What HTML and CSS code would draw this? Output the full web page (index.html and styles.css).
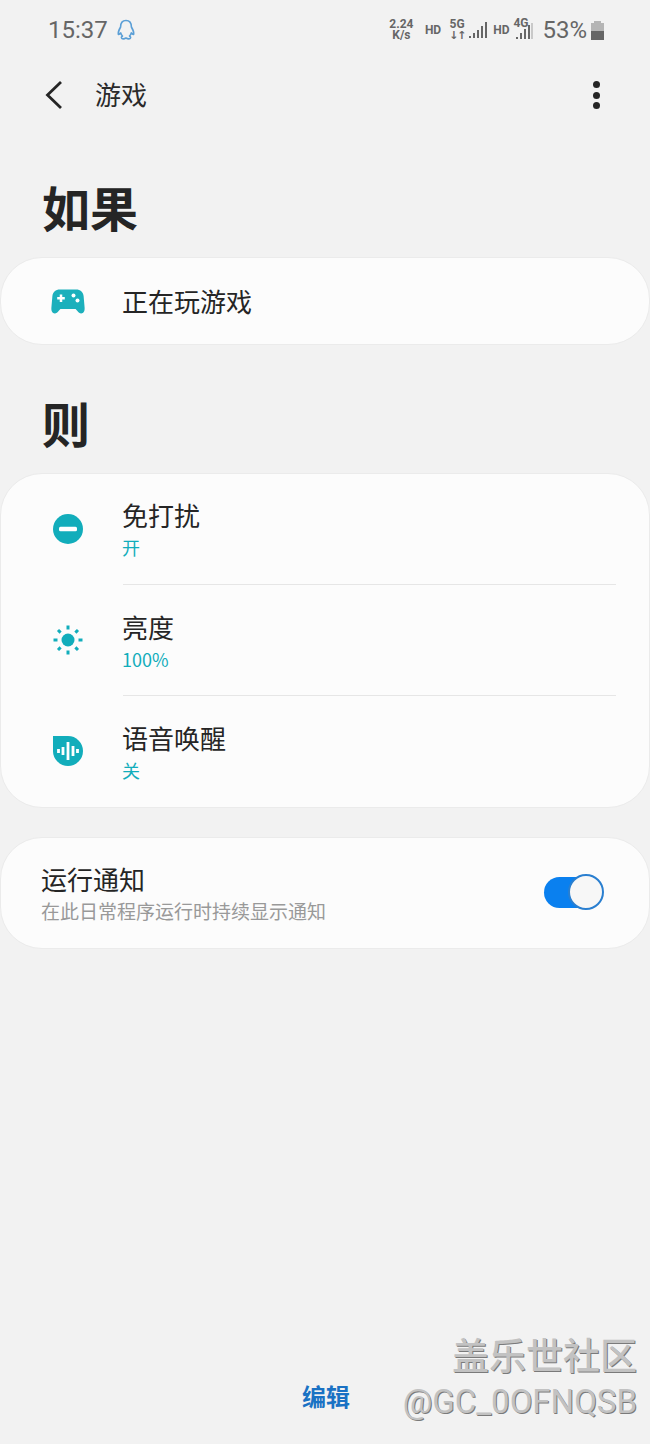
FILE: index.html
```html
<!DOCTYPE html>
<html lang="zh-CN">
<head>
    <meta charset="UTF-8">
    <title>游戏</title>
    <link rel="stylesheet" href="styles.css">
</head>
<body>

<div class="page">

    <div class="statusBar">
        <div class="statusLeft">
            <span class="time">15:37</span>
            <svg class="qq" width="20" height="22" viewBox="0 0 20 22">
                <path d="M10 1.500C6 1.500 4.600 4.600 4.600 8 3.400 10 2 12.400 2.300 15.200c.8.5 1.600-.3 2.400-1.300.3 1.300 1 2.400 1.800 3.100-1 .7-1.500 1.500-.8 2.300 1 .8 2.800.6 4.300-.3 1.500.9 3.300 1.100 4.300.3.700-.8.200-1.600-.8-2.300.8-.7 1.500-1.800 1.800-3.100.8 1 1.600 1.800 2.400 1.300C18 12.400 16.600 10 15.400 8 15.400 4.600 14 1.500 10 1.500Z" fill="none" stroke="#5b9fd6" stroke-width="1.600" stroke-linejoin="round"/>
            </svg>
        </div>
        <div class="statusRight">
            <span class="stack speed">2.24<br>K/s</span>
            <span class="tag hd1">HD</span>
            <span class="stack net">5G<br><i class="arrows">↓↑</i></span>
            <svg class="bars" width="18" height="18" viewBox="0 0 18 18">
                <path d="M1 15v2M5 12v5M9 9v8M13 5v12M17 1v16" stroke="#666" stroke-width="2" fill="none"/>
            </svg>
            <span class="tag hd2">HD</span>
            <span class="sim2">
                <span class="tag small4g">4G</span>
                <svg class="bars2" width="18" height="18" viewBox="0 0 18 18">
                    <path d="M2 15v2M6 11v6M10 7v10M14 3v14" stroke="#666" stroke-width="2" fill="none"/>
                    <path d="M17 1v16" stroke="#bbb" stroke-width="1.500" fill="none"/>
                </svg>
            </span>
            <span class="percent">53%</span>
            <span class="battery"><span class="batteryCap"></span><span class="batteryBody"><span class="batteryFill"></span></span></span>
        </div>
    </div>

    <div class="appBar">
        <svg class="back" width="20" height="30" viewBox="0 0 20 30">
            <path d="M17 2 3.500 15 17 28" fill="none" stroke="#252525" stroke-width="2.800"/>
        </svg>
        <span class="appTitle">游戏</span>
        <div class="more"><i></i><i></i><i></i></div>
    </div>

    <h1 class="sectionTitle first">如果</h1>
    <div class="card">
        <div class="row oneLine">
            <div class="rowIcon">
                <svg width="34" height="25" viewBox="0 0 34 25">
                    <path d="M9 .5h16c4.500 0 7 2.500 7.600 6.500l1 11.500c.3 3.600-1 5.900-3.400 5.900-1.600 0-2.700-.9-3.800-2.300L24.600 20H9.400l-1.800 2.100c-1.100 1.400-2.200 2.300-3.800 2.300-2.400 0-3.700-2.300-3.400-5.900L1.400 7C2 3 4.500.5 9 .5Z" fill="#1cb0bc"/>
                    <path d="M10 5.500v7.500M6.200 9.200h7.600" stroke="#fff" stroke-width="2.500" fill="none"/>
                    <circle cx="22.500" cy="6.500" r="2" fill="#fff"/>
                    <circle cx="26.500" cy="11.500" r="2" fill="#fff"/>
                </svg>
            </div>
            <div class="rowTitle">正在玩游戏</div>
        </div>
    </div>

    <h1 class="sectionTitle second">则</h1>
    <div class="card">
        <div class="row twoLine">
            <div class="rowIcon">
                <svg width="30" height="30" viewBox="0 0 30 30">
                    <circle cx="15" cy="15" r="15" fill="#12adbb"/>
                    <rect x="6" y="12.800" width="18" height="4.400" rx="1.500" fill="#fff"/>
                </svg>
            </div>
            <div class="rowText">
                <div class="rowTitle">免打扰</div>
                <div class="rowValue">开</div>
            </div>
        </div>
        <div class="row twoLine">
            <div class="rowIcon">
                <svg width="30" height="30" viewBox="0 0 30 30">
                    <circle cx="15" cy="15" r="6.500" fill="#12adbb"/>
                    <path d="M15 .5v4M15 25.500v4M.5 15h4M25.500 15h4M5 5l2.600 2.600M22.400 22.400 25 25M5 25l2.600-2.600M22.400 7.600 25 5" stroke="#12adbb" stroke-width="3" fill="none"/>
                </svg>
            </div>
            <div class="rowText">
                <div class="rowTitle">亮度</div>
                <div class="rowValue">100%</div>
            </div>
        </div>
        <div class="row twoLine">
            <div class="rowIcon">
                <svg width="32" height="32" viewBox="0 0 32 32">
                    <path d="M1 1h15a15 15 0 1 1-15 15Z" fill="#12adbb"/>
                    <path d="M6.500 14v4M11 12v8M16 7v18M21 11v10M25.500 14v4" stroke="#fff" stroke-width="2.800" fill="none"/>
                </svg>
            </div>
            <div class="rowText">
                <div class="rowTitle">语音唤醒</div>
                <div class="rowValue">关</div>
            </div>
        </div>
    </div>

    <div class="card notifyCard">
        <div class="notifyText">
            <div class="rowTitle">运行通知</div>
            <div class="notifyDesc">在此日常程序运行时持续显示通知</div>
        </div>
        <div class="switch"><span class="switchThumb"></span></div>
    </div>

    <div class="bottomBar">编辑</div>

    <div class="watermark">
        <div class="markName">盖乐世社区</div>
        <div class="markUser">@GC_0OFNQSB</div>
    </div>

</div>

</body>
</html>
```

FILE: styles.css
```css
* {
    font-family: "Noto Sans CJK SC", "Roboto", "Liberation Sans", sans-serif;
    padding: 0;
    margin: 0;
    box-sizing: border-box;
}

body {
    background: #f2f2f2;
}

.page {
    position: relative;
    width: 650px;
    height: 1444px;
    overflow: hidden;
    background: #f2f2f2;
}

/* status bar */
.statusBar {
    height: 60px;
    display: flex;
    align-items: center;
    justify-content: space-between;
    padding: 0 46px 0 48px;
}

.statusLeft {
    display: flex;
    align-items: center;
    gap: 8px;
}

.time {
    font-family: "Roboto", sans-serif;
    font-size: 24px;
    color: #666;
}

.statusRight {
    display: flex;
    align-items: center;
    color: #666;
}

.stack {
    font-family: "Roboto", sans-serif;
    font-size: 12px;
    line-height: 11px;
    font-weight: 700;
    text-align: center;
}

.speed {
    width: 25px;
}

.tag {
    font-family: "Roboto", sans-serif;
    font-size: 12px;
    font-weight: 700;
}

.hd1 {
    margin-left: 11px;
}

.net {
    width: 16px;
    margin-left: 8px;
}

.arrows {
    font-family: "DejaVu Sans", sans-serif;
    font-style: normal;
    font-weight: 700;
    font-size: 11px;
    letter-spacing: -1px;
}

.bars {
    margin-left: 4px;
}

.hd2 {
    margin-left: 6px;
}

.sim2 {
    position: relative;
    width: 20px;
    height: 22px;
    margin-left: 4px;
}

.small4g {
    position: absolute;
    left: 0;
    top: -3px;
}

.bars2 {
    position: absolute;
    right: 0;
    top: 3px;
}

.percent {
    font-family: "Roboto", sans-serif;
    font-size: 24px;
    margin-left: 9px;
}

.battery {
    display: flex;
    flex-direction: column;
    align-items: center;
    width: 13px;
    margin-left: 4px;
}

.batteryCap {
    width: 7px;
    height: 2px;
    background: #b5b5b5;
}

.batteryBody {
    display: flex;
    align-items: flex-end;
    width: 13px;
    height: 17px;
    background: #b5b5b5;
}

.batteryFill {
    display: block;
    width: 100%;
    height: 9px;
    background: #666;
}

/* app bar */
.appBar {
    height: 70px;
    display: flex;
    align-items: center;
    padding: 0 50px 0 44px;
}

.appTitle {
    font-size: 26px;
    line-height: 36px;
    padding-bottom: 3px;
    color: #2a2a2a;
    margin-left: 31px;
    flex: 1;
}

.more i {
    display: block;
    width: 7px;
    height: 7px;
    border-radius: 50%;
    background: #252525;
    margin: 3.500px 0;
}

/* sections */
.sectionTitle {
    font-size: 48px;
    font-weight: 700;
    line-height: 70px;
    color: #252525;
    padding-left: 42px;
}

.first {
    margin-top: 41px;
    margin-bottom: 16px;
}

.second {
    margin-top: 42px;
    margin-bottom: 16px;
}

.card {
    background: #fcfcfc;
    border: 1px solid #ebebeb;
    border-radius: 42px;
}

.row {
    display: flex;
    align-items: center;
}

.oneLine {
    height: 86px;
}

.twoLine {
    position: relative;
    height: 111px;
}

.twoLine + .twoLine::before {
    content: '';
    position: absolute;
    left: 122px;
    right: 33px;
    top: -1px;
    height: 1px;
    background: #e6e6e6;
}

.rowIcon {
    width: 121px;
    padding-left: 12px;
    display: flex;
    justify-content: center;
    flex-shrink: 0;
}

.twoLine .rowIcon {
    padding-bottom: 2px;
}

.rowText {
    padding-bottom: 3px;
}

.twoLine + .twoLine .rowText {
    padding-bottom: 1px;
}

.rowTitle {
    font-size: 26px;
    line-height: 36px;
    color: #252525;
}

.rowValue {
    font-size: 18px;
    line-height: 26px;
    margin-top: 1px;
    color: #12adbb;
}

/* notify */
.notifyCard {
    height: 112px;
    margin-top: 29px;
    display: flex;
    align-items: center;
    justify-content: space-between;
    padding: 0 45px 1px 40px;
}

.notifyDesc {
    font-size: 19px;
    line-height: 28px;
    color: #999;
}

.switch {
    position: relative;
    width: 60px;
    height: 31px;
    border-radius: 16px 0 0 16px;
    background: linear-gradient(to right, #0a80ef 42px, transparent 42px);
}

.switchThumb {
    position: absolute;
    right: 0;
    top: -3px;
    width: 36px;
    height: 36px;
    border-radius: 50%;
    background: #f7f7f7;
    border: 2px solid #2a7fd0;
}

/* bottom */
.bottomBar {
    position: absolute;
    left: 302px;
    top: 1378px;
    font-size: 24px;
    line-height: 36px;
    font-weight: 700;
    color: #1a72c4;
}

.watermark {
    position: absolute;
    right: 13px;
    top: 1328px;
    text-align: right;
    color: #c2c2c2;
    text-shadow: 1px 1px 0 #7a7a7a;
}

.markName {
    font-size: 37px;
    line-height: 52px;
    font-weight: 500;
}

.markUser {
    font-family: "Roboto", sans-serif;
    font-size: 33px;
    line-height: 44px;
}
```
